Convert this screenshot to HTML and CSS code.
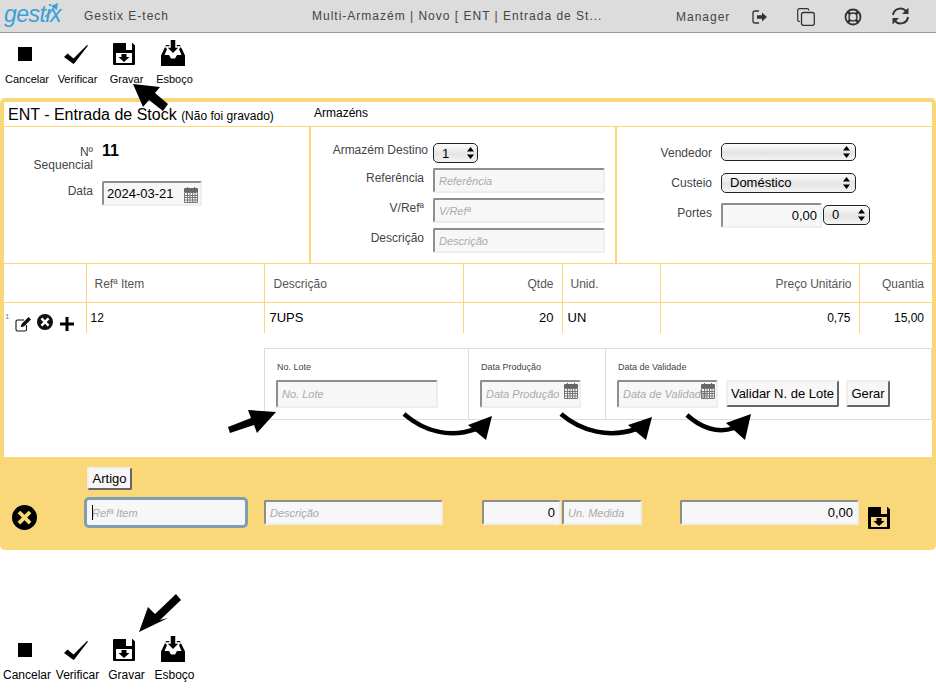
FILE: index.html

```html
<!DOCTYPE html>
<html lang="pt">
<head>
  <meta charset="UTF-8">
  <title>Gestix E-tech</title>
  <link rel="stylesheet" href="styles.css">
</head>
<body>

<svg class="defs" width="0" height="0">
  <symbol id="i-stop" viewBox="0 0 14 14"><rect width="14" height="14"/></symbol>
  <symbol id="i-check" viewBox="0 0 24 20"><path d="M0 13 3.500 9.500 9.500 14.500 23 1 24 1.500 11 18.500 9.500 20Z"/></symbol>
  <symbol id="i-save" viewBox="0 0 22 22">
    <path fill-rule="evenodd" d="M0 1A1 1 0 0 1 1 0H13V7H19V0H19.500L22 2.500V21A1 1 0 0 1 21 22H1A1 1 0 0 1 0 21ZM3 10V20H19V10Z"/>
    <path d="M8.500 11H13.500V14H16.500L11 19 5.500 14H8.500Z"/>
  </symbol>
  <symbol id="i-inbox" viewBox="0 0 24 26">
    <path fill-rule="evenodd" d="M5 5H19L24 15.500V26H0V15.500ZM6.500 8 3.500 15H8L10 18.500H14L16 15H20.500L17.500 8Z"/>
    <path stroke="#fff" stroke-width="1.500" d="M9 -1H15V7H19L12 14 5 7H9Z"/>
  </symbol>
  <symbol id="i-times" viewBox="0 0 16 16">
    <path fill-rule="evenodd" d="M8 0A8 8 0 1 1 8 16 8 8 0 0 1 8 0ZM5.300 3.600 3.600 5.300 6.300 8 3.600 10.700 5.300 12.400 8 9.700 10.700 12.400 12.400 10.700 9.700 8 12.400 5.300 10.700 3.600 8 6.300Z"/>
  </symbol>
  <symbol id="i-cal" viewBox="0 0 16 16">
    <path fill="#666" d="M2 1H4V0H5V1H11V0H12V1H14A1 1 0 0 1 15 2V5H1V2A1 1 0 0 1 2 1Z"/>
    <path fill="none" stroke="#777" d="M1.500 5.500H14.500V15.500H1.500ZM1.500 8.500H14.500M1.500 10.500H14.500M1.500 13H14.500M4.500 5.500V15.500M7 5.500V15.500M9.500 5.500V15.500M12 5.500V15.500"/>
  </symbol>
  <symbol id="i-updown" viewBox="0 0 7 12"><path d="M3.500 0 7 4.500H0ZM0 7.500H7L3.500 12Z"/></symbol>
</svg>

<header class="topbar">
  <div class="logo">gestix<svg class="logo-arrow" width="14" height="14" viewBox="0 0 14 14"><path d="M0 14C4 11 7 8 9 4" fill="none" stroke="#3aa0d8" stroke-width="1.600"/><path fill="#3aa0d8" d="M6 3 13 0 12 7Z"/></svg></div>
  <div class="app-name">Gestix E-tech</div>
  <div class="page-title">Multi-Armazém | Novo [ ENT | Entrada de St...</div>
  <div class="user-name">Manager</div>
  <svg class="head-icon exit" width="16" height="14" viewBox="0 0 16 14"><path fill="none" stroke="#333" stroke-width="1.300" d="M7 1H3A2 2 0 0 0 1 3V11A2 2 0 0 0 3 13H7"/><path fill="#333" d="M5 5.200H10V2.500L15 7 10 11.500V8.800H5Z"/></svg>
  <svg class="head-icon copy" width="18" height="18" viewBox="0 0 18 18"><path fill="none" stroke="#333" stroke-width="1.200" d="M3 13.500H2.500A1.800 1.800 0 0 1 .700 11.700V2.500A1.800 1.800 0 0 1 2.500 .700H10A2 2 0 0 1 12 2.500"/><rect x="4.500" y="4.500" width="12.800" height="12.800" rx="2" fill="none" stroke="#333" stroke-width="1.300"/></svg>
  <svg class="head-icon ring" width="18" height="18" viewBox="0 0 18 18"><circle cx="9" cy="9" r="7.500" fill="none" stroke="#333" stroke-width="1.800"/><circle cx="9" cy="9" r="4" fill="none" stroke="#333" stroke-width="1.500"/><path stroke="#333" stroke-width="3" d="M4 4 6 6M14 4 12 6M4 14 6 12M14 14 12 12"/></svg>
  <svg class="head-icon refresh" width="19" height="18" viewBox="0 0 19 18"><path fill="none" stroke="#333" stroke-width="2" d="M2 8A7.500 7.500 0 0 1 15 4M17 10A7.500 7.500 0 0 1 4 14"/><path fill="#333" d="M17.500 .5V7H11ZM1.500 17.500V11H8Z"/></svg>
</header>

<nav class="tools">
  <div class="tool"><svg class="ico-stop"><use href="#i-stop"/></svg><span>Cancelar</span></div>
  <div class="tool"><svg class="ico-check"><use href="#i-check"/></svg><span>Verificar</span></div>
  <div class="tool"><svg class="ico-save"><use href="#i-save"/></svg><span>Gravar</span></div>
  <div class="tool"><svg class="ico-inbox"><use href="#i-inbox"/></svg><span>Esboço</span></div>
</nav>

<main class="panel">
  <div class="title-row">
    <h1>ENT - Entrada de Stock <small>(Não foi gravado)</small></h1>
    <div class="tab">Armazéns</div>
  </div>

  <section class="head">
    <div class="col col-a">
      <div class="row seq">
        <label class="lbl">Nº<br>Sequencial</label>
        <b class="num">11</b>
      </div>
      <div class="row">
        <label class="lbl up">Data</label>
        <div class="with-cal date-main">
          <input class="inp" value="2024-03-21">
          <svg class="cal"><use href="#i-cal"/></svg>
        </div>
      </div>
    </div>

    <div class="col col-b">
      <div class="row">
        <label class="lbl up first">Armazém Destino</label>
        <div class="sel sel-wh">
          <select><option>1</option></select>
          <svg><use href="#i-updown"/></svg>
        </div>
      </div>
      <div class="row">
        <label class="lbl up">Referência</label>
        <input class="inp wide ph-small" placeholder="Referência">
      </div>
      <div class="row">
        <label class="lbl up">V/Refª</label>
        <input class="inp wide ph-small" placeholder="V/Refª">
      </div>
      <div class="row">
        <label class="lbl up">Descrição</label>
        <input class="inp wide ph-small" placeholder="Descrição">
      </div>
    </div>

    <div class="col col-c">
      <div class="row">
        <label class="lbl">Vendedor</label>
        <div class="sel sel-vend">
          <select><option></option></select>
          <svg><use href="#i-updown"/></svg>
        </div>
      </div>
      <div class="row">
        <label class="lbl">Custeio</label>
        <div class="sel sel-cust">
          <select><option>Doméstico</option></select>
          <svg><use href="#i-updown"/></svg>
        </div>
      </div>
      <div class="row">
        <label class="lbl up">Portes</label>
        <input class="inp portes right" value="0,00">
        <div class="sel sel-port">
          <select><option>0</option></select>
          <svg><use href="#i-updown"/></svg>
        </div>
      </div>
    </div>
  </section>

  <table class="items">
    <colgroup>
      <col class="c-act"><col class="c-ref"><col class="c-desc"><col class="c-qty">
      <col class="c-unit"><col class="c-price"><col class="c-total">
    </colgroup>
    <thead>
      <tr>
        <th></th>
        <th>Refª Item</th>
        <th class="pad-desc">Descrição</th>
        <th class="num-col">Qtde</th>
        <th>Unid.</th>
        <th class="num-col pad-price">Preço Unitário</th>
        <th class="num-col">Quantia</th>
      </tr>
    </thead>
    <tbody>
      <tr>
        <td class="actions">
          <span class="line-no">1</span>
          <svg class="ico-edit" width="17" height="16" viewBox="0 0 17 16"><path fill="none" stroke="#111" stroke-width="1.100" d="M11.500 9V13.500A1.500 1.500 0 0 1 10 15H2.500A1.500 1.500 0 0 1 1 13.500V5.500A1.500 1.500 0 0 1 2.500 4H9"/><path fill="#111" d="M13.500 1 16 3.500 9 10.500 5.800 11.200 6.500 8Z"/></svg>
          <svg class="ico-times"><use href="#i-times"/></svg>
          <svg class="ico-plus" width="14" height="14" viewBox="0 0 14 14"><path d="M5.500 0H8.500V5.500H14V8.500H8.500V14H5.500V8.500H0V5.500H5.500Z"/></svg>
        </td>
        <td class="val-small">12</td>
        <td class="val">7UPS</td>
        <td class="val right">20</td>
        <td class="val">UN</td>
        <td class="val-small right">0,75</td>
        <td class="val-small right">15,00</td>
      </tr>
    </tbody>
  </table>

  <section class="lote">
    <div class="lote-cell cell-no">
      <label>No. Lote</label>
      <input class="inp ph-small lote-no" placeholder="No. Lote">
    </div>
    <div class="lote-cell cell-prod">
      <label>Data Produção</label>
      <div class="with-cal date-lote">
        <input class="inp ph-small" placeholder="Data Produção">
        <svg class="cal"><use href="#i-cal"/></svg>
      </div>
    </div>
    <div class="lote-cell cell-val">
      <label>Data de Validade</label>
      <div class="lote-line">
        <div class="with-cal date-lote">
          <input class="inp ph-small" placeholder="Data de Validade">
          <svg class="cal"><use href="#i-cal"/></svg>
        </div>
        <button class="btn btn-val">Validar N. de Lote</button>
        <button class="btn btn-gen">Gerar</button>
      </div>
    </div>
  </section>

  <section class="add-line">
    <button class="btn btn-art">Artigo</button>
    <div class="add-row">
      <svg class="ico-times big"><use href="#i-times"/></svg>
      <div class="f-ref-wrap">
        <input class="inp f-ref ph-small" placeholder="Refª Item">
      </div>
      <input class="inp f-desc ph-small" placeholder="Descrição">
      <input class="inp f-qty right" value="0">
      <input class="inp f-un ph-small" placeholder="Un. Medida">
      <input class="inp f-val right" value="0,00">
      <svg class="ico-save f-save"><use href="#i-save"/></svg>
    </div>
  </section>
</main>

<nav class="tools tools-bottom">
  <div class="tool"><svg class="ico-stop"><use href="#i-stop"/></svg><span>Cancelar</span></div>
  <div class="tool"><svg class="ico-check"><use href="#i-check"/></svg><span>Verificar</span></div>
  <div class="tool"><svg class="ico-save"><use href="#i-save"/></svg><span>Gravar</span></div>
  <div class="tool"><svg class="ico-inbox"><use href="#i-inbox"/></svg><span>Esboço</span></div>
</nav>

<!-- setas desenhadas por cima da captura -->
<svg class="arrows" width="936" height="699" viewBox="0 0 936 699">
  <path d="M133 84 160 87 155 93 168 104 163 111 149 100 143 107Z"/>
  <path d="M276 412 257 433 254 425 230 433 228 427 251 418 248 410Z"/>
  <path class="curve" d="M404 414C425 432 450 438 476 429"/>
  <path d="M492 416 486 440 468 425Z"/>
  <path class="curve" d="M561 414C582 432 610 438 636 429"/>
  <path d="M652 417 646 440 628 425Z"/>
  <path class="curve" d="M687 415C700 427 717 434 734 428"/>
  <path d="M751 414 745 440 726 423Z"/>
  <path d="M139 632 148 607 155 614 176 594 181 600 160 620 168 618Z"/>
</svg>

</body>
</html>
```

FILE: styles.css

```css
* { box-sizing: border-box; }
body { margin: 0; background: #fff; color: #000; font-family: "Liberation Sans", Arial, sans-serif; font-size: 12px; position: relative; width: 936px; height: 699px; overflow: hidden; }
.defs { position: absolute; }

.topbar { height: 33px; background: #dcdcdc; border-bottom: 1px solid #999; display: flex; align-items: center; color: #444; letter-spacing: 1px; font-size: 12px; }
.logo { width: 84px; padding-left: 4px; color: #3aa0d8; font-size: 23px; font-style: italic; letter-spacing: -.5px; position: relative; margin-top: -4px; }
.logo-arrow { position: absolute; left: 45px; top: 2px; }
.app-name { width: 228px; }
.page-title { width: 364px; }
.user-name { width: 76px; margin-top: 1px; }
.head-icon { flex: none; }
.exit { margin-right: 29px; margin-top: 2px; }
.copy { margin-right: 29px; margin-top: 1px; }
.ring { margin-right: 29px; margin-top: 1px; }
.refresh { margin-top: -1px; }

.tools { height: 65px; margin-left: 2px; display: grid; grid-template-columns: 50px 51px 47px 49px; width: 197px; }
.tool { position: relative; text-align: center; font-size: 11px; }
.tool svg { position: absolute; }
.tool span { position: absolute; top: 40px; left: -5px; right: -5px; }
.ico-stop { width: 14px; height: 14px; left: 16px; top: 14px; }
.ico-check { width: 24px; height: 20px; left: 12px; top: 11px; }
.ico-save { width: 22px; height: 22px; left: 10px; top: 10px; }
.ico-inbox { width: 24px; height: 26px; left: 11px; top: 7px; }
.tools-bottom { margin-top: 79px; }
.tools-bottom .tool { font-size: 12px; }
.tools-bottom .tool span { top: 39px; }

.panel { height: 452px; border: 4px solid #fad87a; border-radius: 5px; background: #fff; }
.title-row { height: 25px; border-bottom: 1px solid #fad87a; display: flex; align-items: center; }
h1 { margin: 1px 0 0 4px; width: 306px; font-size: 16px; font-weight: normal; white-space: nowrap; }
h1 small { font-size: 12px; }
.tab { margin-bottom: 3px; }

.head { height: 137px; border-bottom: 1px solid #fad87a; display: grid; grid-template-columns: 307px 306px 1fr; }
.col { padding-top: 16px; border-right: 2px solid #fad87a; display: flex; flex-direction: column; }
.col-c { border-right: 0; }
.row { display: flex; align-items: center; }
.lbl { color: #444; text-align: right; flex: none; line-height: 13px; }
.lbl.up { padding-bottom: 5px; }

.col-a .lbl { width: 89px; margin-right: 9px; }
.col-a .seq { align-items: flex-start; margin-bottom: 9px; height: 29px; }
.col-a .seq .lbl { margin-top: 3px; }
.num { font-size: 16px; margin-top: -1px; }

.col-b { gap: 5px; }
.col-b .lbl { width: 113px; margin-right: 9px; }
.col-b .lbl.first { width: 117px; margin-right: 5px; }
.col-c { padding-top: 16px; }
.col-c .lbl { width: 95px; margin-right: 9px; }
.col-c .row:nth-child(1) { height: 18px; margin-bottom: 12px; }
.col-c .row:nth-child(1) .lbl { padding-top: 2px; }
.col-c .row:nth-child(2) { height: 20px; margin-bottom: 10px; }

.inp { height: 25px; border: 2px solid; border-color: #8e8e8e #eee #eee #8e8e8e; border-radius: 2px; background: #f7f7f7; padding: 0 4px; font: 13px "Liberation Sans", Arial, sans-serif; color: #000; outline: 0; }
.inp::placeholder { color: #aaa; font-style: italic; opacity: 1; }
.ph-small::placeholder { font-size: 11px; }
.wide { width: 172px; }
.right { text-align: right; }
.portes { width: 101px; height: 25px; margin-right: 1px; padding-right: 3px; }

.with-cal { position: relative; }
.with-cal .inp { width: 100%; }
.date-main { width: 100px; height: 25px; }
.date-main .inp { padding-left: 3px; }
.date-lote { width: 101px; height: 28px; }
.date-lote .inp { height: 28px; }
.cal { position: absolute; width: 16px; height: 16px; right: 3px; top: 6px; }
.date-lote .cal { top: 3px; right: 2px; }

.sel { position: relative; flex: none; }
.sel select { appearance: none; display: block; width: 100%; height: 100%; border: 1px solid #222; border-radius: 5px; padding: 0 0 0 8px; font: 13px "Liberation Sans", Arial, sans-serif; color: #000; background: linear-gradient(#fdfdfd, #e4e4e4 55%, #f4f4f4); outline: 0; }
.sel svg { position: absolute; width: 7px; height: 12px; right: 4px; top: 50%; margin-top: -6px; }
.sel-wh { width: 45px; height: 20px; }
.sel-vend { width: 135px; height: 18px; }
.sel-cust { width: 135px; height: 20px; }
.sel-cust select { padding-bottom: 2px; }
.sel-port { width: 47px; height: 20px; margin-bottom: 2px; }
.sel-vend svg, .sel-cust svg { right: 6px; }
.sel-port svg { right: 5px; }

.items { border-collapse: collapse; table-layout: fixed; width: 928px; }
.c-act { width: 82px; }
.c-ref { width: 178px; }
.c-desc { width: 199px; }
.c-qty { width: 99px; }
.c-unit { width: 98px; }
.c-price { width: 199px; }
.c-total { width: 73px; }
.items th, .items td { border-left: 1px solid #fad87a; padding: 0 8px; }
.items th:first-child, .items td:first-child { border-left: 0; }
.items th { height: 38px; padding-top: 2px; border-bottom: 1px solid #fad87a; font-weight: normal; color: #555; text-align: left; }
.items th.num-col { text-align: right; }
.items th.pad-desc { padding-left: 9px; }
.items th.pad-price { padding-right: 7px; }
.items td { height: 30px; vertical-align: top; padding-top: 7px; font-size: 13px; line-height: 16px; }
.items td.val { padding-left: 5px; }
.items td.val-small { font-size: 12px; padding-left: 4px; }
.items td.actions { padding: 0; position: relative; display: flex; align-items: flex-start; height: 30px; }
.line-no { font-size: 8px; color: #888; margin: 9px 0 0 1px; width: 10px; line-height: 10px; }
.ico-edit { margin-top: 13px; flex: none; }
.ico-times { width: 16px; height: 16px; flex: none; margin: 11px 0 0 5px; fill: #111; }
.ico-plus { flex: none; margin: 14px 0 0 7px; }

.lote { margin: 15px 0 37px 260px; width: 668px; height: 72px; border: 1px solid #ddd; display: flex; }
.lote-cell { padding: 13px 0 0 11px; border-right: 1px solid #ddd; }
.cell-no { width: 204px; }
.cell-prod { width: 137px; }
.cell-val { flex: 1; border-right: 0; }
.lote-cell label { display: block; font-size: 9px; color: #444; line-height: 11px; margin: 0 0 7px 1px; }
.lote-no { width: 162px; height: 28px; }
.lote-line { display: flex; align-items: center; }
.btn { font: 13px "Liberation Sans", Arial, sans-serif; color: #000; height: 27px; padding: 0; background: #f7f7f7; border: 2px solid; border-color: #eee #666 #666 #eee; border-radius: 2px; }
.btn-val { width: 113px; margin-left: 8px; }
.btn-gen { width: 44px; margin-left: 7px; }

.add-line { height: 89px; background: #fad87a; padding-top: 10px; }
.btn-art { display: block; margin-left: 83px; width: 45px; height: 23px; }
.add-row { display: flex; align-items: flex-start; margin-top: 8px; padding-left: 8px; }
.ico-times.big { width: 25px; height: 25px; margin: 7px 0 0 0; fill: #000; }
.f-ref-wrap { position: relative; flex: none; width: 164px; height: 31px; margin: -1px 0 0 47px; }
.f-ref-wrap::after { content: ""; position: absolute; left: 8px; top: 8px; width: 1px; height: 15px; background: #000; }
.f-ref { display: block; width: 164px; height: 31px; padding-left: 5px; border: 3px solid #7f9db5; border-radius: 5px; }
.f-desc { width: 179px; margin: 2px 0 0 16px; }
.f-qty { width: 79px; margin: 2px 0 0 39px; }
.f-un { width: 80px; margin: 2px 0 0 1px; }
.f-val { width: 179px; margin: 2px 0 0 38px; }
.f-save { width: 22px; height: 22px; margin: 9px 0 0 9px; flex: none; }

.arrows { position: absolute; left: 0; top: 0; pointer-events: none; }
.arrows .curve { fill: none; stroke: #000; stroke-width: 4.500; }
```
